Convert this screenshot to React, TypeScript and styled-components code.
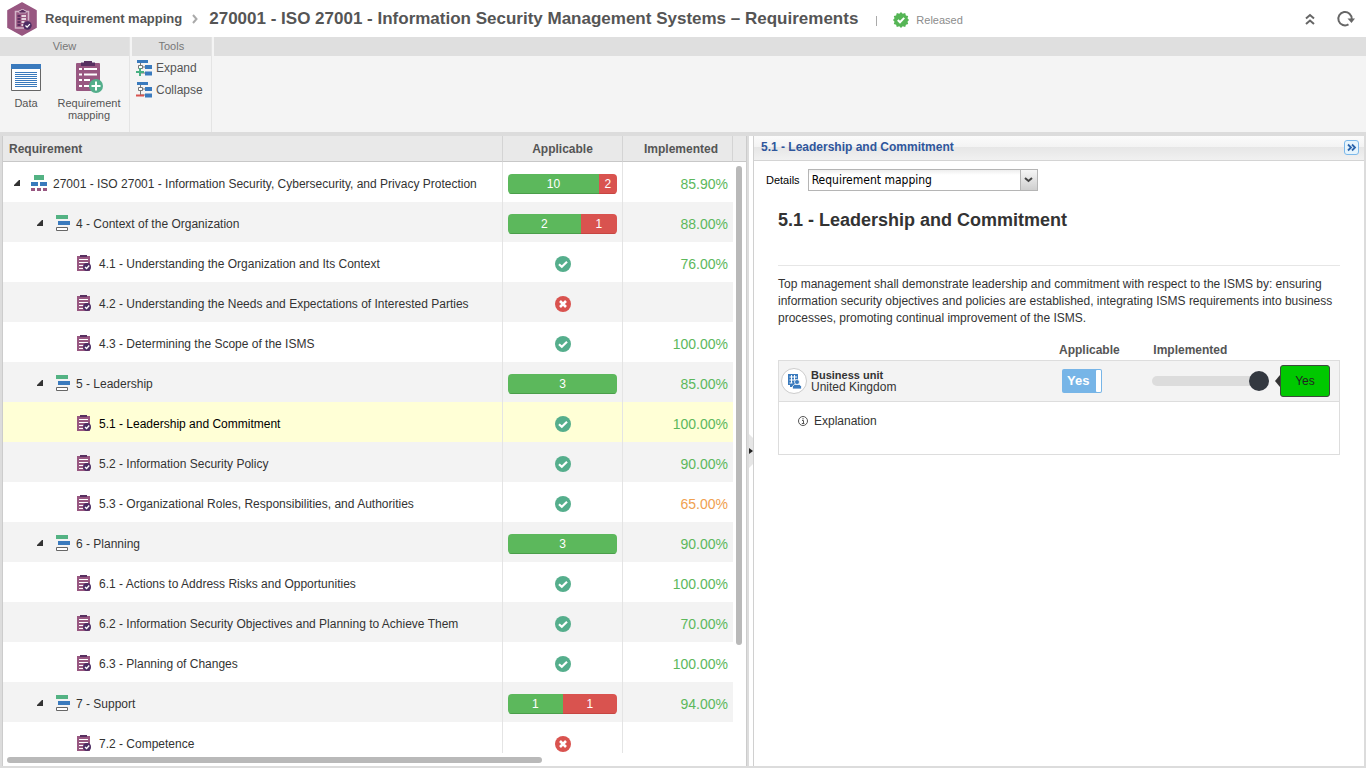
import React, { useState } from "react";
import styled, { createGlobalStyle, css } from "styled-components";

const sans = `"Liberation Sans", Arial, sans-serif`;
const humanist = `"DejaVu Sans Condensed", Tahoma, sans-serif`;

const GlobalStyle = createGlobalStyle`
  *, *::before, *::after { box-sizing: border-box; }
  body { margin: 0; background: #fff; color: #333; font: 12px/16px ${sans}; }
  button, input, select { font-family: inherit; }
  h1, h2, p { margin: 0; }
`;

const Page = styled.div`
  display: flex;
  flex-direction: column;
  height: 100vh;
  min-height: 320px;
  overflow: hidden;
`;

/* ---------- Title bar ---------- */

const TitleBar = styled.header`
  flex: none;
  display: flex;
  align-items: center;
  height: 37px;
  padding: 0 11px 0 7px;
  color: #555;
`;

const ModuleLink = styled.a`
  margin-left: 8px;
  color: #555;
  font-size: 13px;
  font-weight: bold;
  text-decoration: none;
`;

const Chevron = styled.svg`
  margin: 0 11px 0 10px;
`;

const Title = styled.h1`
  font-size: 17px;
  line-height: 20px;
  color: #555;
`;

const Divider = styled.span`
  width: 1px;
  height: 10px;
  margin: 4px 16px 0 18px;
  background: #aaa;
`;

const Status = styled.span`
  display: flex;
  align-items: center;
  gap: 7px;
  padding-top: 3px;
  font-size: 11px;
  color: #8c8c8c;
`;

const TitleActions = styled.div`
  display: flex;
  align-items: center;
  gap: 16px;
  margin-left: auto;
`;

const IconButton = styled.button`
  display: flex;
  padding: 0;
  border: 0;
  background: none;
  cursor: pointer;
`;

/* ---------- Ribbon ---------- */

const Ribbon = styled.nav`
  flex: none;
  display: flex;
  height: 95px;
  background: #f4f4f4;
`;

const RibbonGroup = styled.section`
  display: flex;
  flex-direction: column;
  border-right: 1px solid #e4e4e4;
  margin-right: 2px;
`;

const RibbonCaption = styled.h2`
  height: 19px;
  background: #dfdfdf;
  color: #777;
  font-size: 11px;
  font-weight: normal;
  line-height: 19px;
  text-align: center;
`;

const RibbonFiller = styled.div`
  flex: 1;
  height: 19px;
  background: #dfdfdf;
`;

const RibbonTools = styled.div<{ $stacked?: boolean }>`
  display: flex;
  ${(p) =>
    p.$stacked
      ? css`
          flex-direction: column;
          gap: 4px;
          padding: 3px 8px 0 4px;
        `
      : css`
          gap: 4px;
          padding: 4px 3px 0 4px;
        `}
`;

const LargeButton = styled.button<{ $wide?: boolean }>`
  display: flex;
  flex-direction: column;
  align-items: center;
  gap: 4px;
  width: ${(p) => (p.$wide ? 74 : 44)}px;
  padding: 0;
  border: 0;
  background: none;
  color: #555;
  font-size: 11px;
  line-height: 12px;
  cursor: pointer;
`;

const SmallButton = styled.button`
  display: flex;
  align-items: center;
  gap: 4px;
  height: 18px;
  padding: 0;
  border: 0;
  background: none;
  color: #555;
  font-size: 12px;
  cursor: pointer;
`;

/* ---------- Workspace ---------- */

const Workspace = styled.main`
  flex: 1;
  min-height: 0;
  display: grid;
  grid-template-columns: minmax(0, 745fr) 7px minmax(0, 610fr);
  padding: 0 2px;
  border-top: 4px solid #dcdcdc;
  border-bottom: 2px solid #dcdcdc;
  background: #dcdcdc;
`;

const ListPane = styled.section`
  position: relative;
  min-height: 0;
  overflow: hidden;
  border-left: 1px solid #ccc;
  border-right: 1px solid #ccc;
  background: #fff;
`;

const ListViewport = styled.div`
  height: calc(100% - 13px);
  overflow: hidden;
`;

const Grid = styled.table`
  width: 100%;
  border-collapse: separate;
  border-spacing: 0;
  table-layout: fixed;
`;

const HeadCell = styled.th<{ $width?: number; $align?: "center" | "right" }>`
  width: ${(p) => (p.$width ? `${p.$width}px` : "auto")};
  height: 26px;
  padding: 0 ${(p) => (p.$align === "right" ? 14 : 6)}px 0 6px;
  border-right: 1px solid #d4d4d4;
  border-bottom: 1px solid #c8c8c8;
  background: #e9e9e9;
  color: #555;
  font-size: 12px;
  text-align: ${(p) => p.$align ?? "left"};
  &:last-child {
    border-right: 0;
  }
`;

const Row = styled.tr<{ $tone: "plain" | "shade" | "selected" }>`
  --row: ${(p) =>
    p.$tone === "selected" ? "#ffffd6" : p.$tone === "shade" ? "#f3f3f3" : "#fff"};
  color: ${(p) => (p.$tone === "selected" ? "#000" : "#333")};
`;

const Cell = styled.td`
  height: 40px;
  padding: 3px 5px 0;
  border-right: 1px solid #e4e4e4;
  background: var(--row);
  vertical-align: middle;
  &:nth-child(3) {
    border-right: 0;
  }
`;

const GutterCell = styled.td`
  padding: 0;
`;

const NameCell = styled.div<{ $level: number }>`
  display: flex;
  align-items: center;
  height: 18px;
  padding-left: ${(p) => [6, 29, 69][p.$level]}px;
  white-space: nowrap;
`;

const ExpandButton = styled(IconButton)<{ $level: number }>`
  width: 8px;
  margin-right: ${(p) => (p.$level ? 11 : 9)}px;
`;

const NameText = styled.span<{ $gap: number }>`
  margin-left: ${(p) => p.$gap}px;
`;

const Centered = styled.div`
  display: flex;
  justify-content: center;
`;

const CountBar = styled.div`
  display: flex;
  height: 20px;
  overflow: hidden;
  border-radius: 4px;
  color: #fff;
  line-height: 20px;
  text-align: center;
`;

const CountPart = styled.span<{ $share: number; $kind: "yes" | "no" }>`
  flex: ${(p) => p.$share} 1 0;
  background: ${(p) => (p.$kind === "yes" ? "#5cb85c" : "#d9534f")};
  box-shadow: inset 0 -1px 0 ${(p) => (p.$kind === "yes" ? "#4a9e4a" : "#c64541")};
`;

const Percent = styled.div<{ $low?: boolean }>`
  color: ${(p) => (p.$low ? "#f0a150" : "#5cb85c")};
  font-size: 14px;
  text-align: right;
`;

const ScrollThumb = styled.div<{ $axis: "x" | "y" }>`
  position: absolute;
  border-radius: 3px;
  background: #b9b9b9;
  ${(p) =>
    p.$axis === "y"
      ? css`
          top: 30px;
          right: 4px;
          width: 6px;
          height: 76%;
        `
      : css`
          left: 4px;
          bottom: 3px;
          width: 72%;
          height: 6px;
        `}
`;

const Splitter = styled.div`
  display: flex;
  align-items: center;
  justify-content: flex-end;
  border-left: 2px solid #dcdcdc;
  border-right: 1px solid #d0d0d0;
  background: #fff;
`;

/* ---------- Details pane ---------- */

const DetailsPane = styled.section`
  min-width: 0;
  overflow: hidden;
  background: #fff;
`;

const PaneHeader = styled.div`
  display: flex;
  align-items: center;
  justify-content: space-between;
  height: 25px;
  padding: 0 5px 3px 7px;
  border-bottom: 1px solid #d4d4d4;
  background: linear-gradient(#fbfbfb 0, #f3f3f3 11px, #e6e6e6 11px, #f1f1f1 100%);
`;

const PaneTitle = styled.h2`
  color: #2f569c;
  font-size: 12px;
  line-height: 16px;
`;

const CollapsePane = styled(IconButton)`
  margin-top: 2px;
  padding: 1px;
  border: 1px solid #7cb8ea;
  border-radius: 3px;
  background: #e6f4fc;
`;

const FieldRow = styled.div`
  display: flex;
  align-items: center;
  gap: 8px;
  padding: 8px 12px;
  color: #000;
  font-size: 11px;
`;

const SelectBox = styled.div`
  position: relative;
  display: flex;
  width: 230px;
`;

const Select = styled.select`
  appearance: none;
  width: 100%;
  height: 22px;
  padding: 0 20px 0 3px;
  border: 1px solid #b5b5b5;
  border-radius: 0;
  background: linear-gradient(#eee, #fff 5px);
  color: #000;
  font: 12px/18px ${humanist};
`;

const SelectArrow = styled.span`
  position: absolute;
  top: 1px;
  right: 1px;
  display: flex;
  align-items: center;
  justify-content: center;
  width: 17px;
  height: 20px;
  border-left: 1px solid #b5b5b5;
  background: linear-gradient(#f6f6f6, #cfcfcf);
  pointer-events: none;
`;

const Content = styled.div`
  padding: 9px 24px 0;
`;

const ContentTitle = styled.h2`
  padding-bottom: 33px;
  border-bottom: 1px solid #e6e6e6;
  font-size: 18px;
  line-height: 24px;
`;

const Description = styled.p`
  padding: 10px 0 15px;
  line-height: 17px;
`;

const unitColumns = css`
  display: grid;
  grid-template-columns: minmax(0, 1fr) 91px 190px;
`;

const UnitHead = styled.div`
  ${unitColumns}
  padding-bottom: 2px;
  color: #555;
  font-weight: bold;
`;

const UnitCard = styled.div`
  border: 1px solid #ddd;
`;

const UnitRow = styled.div`
  ${unitColumns}
  align-items: center;
  height: 41px;
  padding-bottom: 1px;
  border-bottom: 1px solid #ddd;
  background: #f3f3f3;
`;

const Unit = styled.div`
  display: flex;
  align-items: center;
  gap: 4px;
  padding-left: 2px;
  line-height: 12px;
`;

const UnitIcon = styled.span`
  display: flex;
  align-items: center;
  justify-content: center;
  width: 26px;
  height: 26px;
  border: 1px solid #ccc;
  border-radius: 50%;
  background: #fff;
`;

const UnitKind = styled.strong`
  display: block;
  font-size: 11px;
`;

const Toggle = styled.label`
  display: flex;
  align-items: center;
  justify-content: space-between;
  width: 40px;
  height: 24px;
  margin-left: 4px;
  padding: 1px 1px 1px 5px;
  border-radius: 2px;
  background: #77b5e7;
  color: #fff;
  font-weight: bold;
  font-size: 13px;
  cursor: pointer;
`;

const ToggleInput = styled.input`
  position: absolute;
  opacity: 0;
  width: 1px;
  height: 1px;
  margin: 0;
`;

const ToggleKnob = styled.span`
  width: 5px;
  height: 22px;
  border-radius: 1px;
  background: #fff;
`;

const SliderCell = styled.div`
  display: flex;
  align-items: center;
`;

const Slider = styled.input`
  appearance: none;
  width: 117px;
  height: 10px;
  margin: 0 6px 0 3px;
  border-radius: 5px;
  background: #dcdcdc;
  &::-webkit-slider-thumb {
    appearance: none;
    width: 20px;
    height: 20px;
    border-radius: 50%;
    background: #333840;
  }
`;

const SliderValue = styled.output`
  display: flex;
  align-items: center;
  justify-content: center;
  width: 50px;
  height: 32px;
  border: 1px solid #3c4a3c;
  border-radius: 3px;
  background: #00c800;
  color: #222;
`;

const Explanation = styled.div`
  display: flex;
  align-items: flex-start;
  gap: 6px;
  height: 52px;
  padding: 11px 19px;
`;

/* ---------- Drawings ---------- */

const ModuleLogo = () => (
  <svg width="30" height="34" viewBox="0 0 30 34" aria-hidden="true">
    <path d="M15 1 29 8.6V25.4L15 33 1 25.4V8.6Z" fill="#985781" stroke="#985781" strokeWidth="1.6" strokeLinejoin="round" />
    <path d="M10 9.500h11.500v9M10 9.500h-1.500v16.500h8.500" fill="none" stroke="#d3b6ca" strokeWidth="1.500" />
    <path d="M12 10V8.500h2V7.500h3v1h2V11h-7Z" fill="#5c2f60" stroke="#d3b6ca" strokeWidth=".8" />
    <path d="M10.500 14h3M10.500 17h3M10.500 20h3M10.500 23h3" stroke="#5c2f60" strokeWidth="2" />
    <path d="M14.500 14h4.500M14.500 17h4.500M14.500 20h3M14.500 23h2" stroke="#fff" strokeWidth="1.300" />
    <circle cx="20.500" cy="23.500" r="4.200" fill="#4d2c63" />
    <path d="m18.500 23.500 1.600 1.600 2.800-3" fill="none" stroke="#fff" strokeWidth="1.300" />
  </svg>
);

const ReleasedSeal = () => (
  <svg width="16" height="16" viewBox="0 0 16 16" aria-hidden="true">
    <path
      d="M8 0l1.700 1.800L12.200 1l.7 2.400L15.200 4l-.7 2.300L16 8l-1.500 1.700.7 2.300-2.300.8-.7 2.300-2.500-.8L8 16l-1.700-1.700-2.500.8-.7-2.300L.8 12l.7-2.300L0 8l1.500-1.700L.8 4l2.300-.6L3.800 1l2.500.8Z"
      fill="#55b555"
    />
    <path d="m4.800 8 2.200 2.300 4.200-4.400" fill="none" stroke="#fff" strokeWidth="2" />
  </svg>
);

const DataIcon = () => (
  <svg width="30" height="33" viewBox="0 0 30 33" aria-hidden="true">
    <path d="M.5 5H29.500V30.500H.5Z" fill="#fff" stroke="#666" />
    <path d="M0 4H30V9H0Z" fill="#3a7abd" />
    <path d="M4 12.500H26M4 14.500H26M4 16.500H26M4 18.500H26M4 20.500H26M4 22.500H26M4 24.500H26M4 26.500H26" stroke="#3a7abd" />
  </svg>
);

const MappingIcon = () => (
  <svg width="28" height="33" viewBox="0 0 28 33" aria-hidden="true">
    <rect x="1" y="3" width="24" height="28" rx="1" fill="#985781" />
    <path d="M6 2.500h3V1h8v1.500h3V6H6Z" fill="#573060" />
    <path d="M4 9h3M4 14.500h3M4 20h3M4 26h3M9 9h13M9 14.500h13M9 20h6M9 26h5" stroke="#fff" strokeWidth="2" />
    <circle cx="21" cy="26" r="7" fill="#53ae8b" />
    <path d="M21 21.500v9M16.500 26h9" stroke="#fff" strokeWidth="2" />
  </svg>
);

const TreeToolIcon = ({ mode }: { mode: "expand" | "collapse" }) => (
  <svg width="16" height="16" viewBox="0 0 16 16" aria-hidden="true">
    <path d="M1 0h11v3H1ZM9 5h7v4H9ZM9 11.500h7v4H9Z" fill="#3a7abd" />
    <path d="M4.500 3v2M7 7h2M4.500 9v4H9" fill="none" stroke="#777" />
    <path d="M2.500 5.500h4v3h-4Z" fill="#fff" stroke="#777" />
    {mode === "expand" ? (
      <path d="M4 8v8M0 12h8" stroke="#48b083" strokeWidth="2" />
    ) : (
      <path d="M0 13.500h8" stroke="#d9534f" strokeWidth="2" />
    )}
  </svg>
);

const StandardIcon = () => (
  <svg width="16" height="18" viewBox="0 0 16 18" aria-hidden="true">
    <path d="M3 0h10v5H3Z" fill="#53b283" />
    <path d="M0 7h7v4H0ZM9 7h7v4H9Z" fill="#3a7abd" />
    <path d="M0 13h4v3H0ZM6 13h4v3H6ZM12 13h4v3h-4Z" fill="#985781" />
  </svg>
);

const ChapterIcon = () => (
  <svg width="14" height="18" viewBox="0 0 14 18" aria-hidden="true">
    <path d="M0 0h12v4H0Z" fill="#53b283" />
    <path d="M2 6h12v4H2Z" fill="#3a7abd" />
    <path d="M.5 12.500h11v3H.5Z" fill="#fff" stroke="#666" />
  </svg>
);

const ClauseIcon = () => (
  <svg width="15" height="18" viewBox="0 0 15 18" aria-hidden="true">
    <path d="M0 1h13v15H0Z" fill="#985781" />
    <path d="M3 0h7v2H3Z" fill="#573060" />
    <path d="M2 4.500h9M2 7.500h9M2 10.500h5M2 13.500h4" stroke="#fff" />
    <circle cx="10" cy="12" r="4" fill="#4d2c63" />
    <path d="m8 12 1.600 1.500 2.600-3" fill="none" stroke="#fff" strokeWidth="1.400" />
  </svg>
);

const ExpandedArrow = () => (
  <svg width="7" height="8" viewBox="0 0 7 8" aria-hidden="true">
    <path d="M5 0H6V6H0V5Z" fill="#333" />
  </svg>
);

const Mark = ({ ok }: { ok: boolean }) => (
  <svg width="16" height="16" viewBox="0 0 16 16" role="img" aria-label={ok ? "Yes" : "No"}>
    <circle cx="8" cy="8" r="8" fill={ok ? "#55ae8c" : "#d9534f"} />
    {ok ? (
      <path d="m4 8.200 2.800 2.600 5.200-5" fill="none" stroke="#fff" strokeWidth="2.200" />
    ) : (
      <path d="m5 5 6 6M11 5l-6 6" stroke="#fff" strokeWidth="2.600" />
    )}
  </svg>
);

/* ---------- Data ---------- */

type Item = {
  level: 0 | 1 | 2;
  name: string;
  counts?: [number, number];
  applicable?: boolean;
  done?: string;
  low?: boolean;
};

const items: Item[] = [
  { level: 0, name: "27001 - ISO 27001 - Information Security, Cybersecurity, and Privacy Protection", counts: [10, 2], done: "85.90%" },
  { level: 1, name: "4 - Context of the Organization", counts: [2, 1], done: "88.00%" },
  { level: 2, name: "4.1 - Understanding the Organization and Its Context", applicable: true, done: "76.00%" },
  { level: 2, name: "4.2 - Understanding the Needs and Expectations of Interested Parties", applicable: false },
  { level: 2, name: "4.3 - Determining the Scope of the ISMS", applicable: true, done: "100.00%" },
  { level: 1, name: "5 - Leadership", counts: [3, 0], done: "85.00%" },
  { level: 2, name: "5.1 - Leadership and Commitment", applicable: true, done: "100.00%" },
  { level: 2, name: "5.2 - Information Security Policy", applicable: true, done: "90.00%" },
  { level: 2, name: "5.3 - Organizational Roles, Responsibilities, and Authorities", applicable: true, done: "65.00%", low: true },
  { level: 1, name: "6 - Planning", counts: [3, 0], done: "90.00%" },
  { level: 2, name: "6.1 - Actions to Address Risks and Opportunities", applicable: true, done: "100.00%" },
  { level: 2, name: "6.2 - Information Security Objectives and Planning to Achieve Them", applicable: true, done: "70.00%" },
  { level: 2, name: "6.3 - Planning of Changes", applicable: true, done: "100.00%" },
  { level: 1, name: "7 - Support", counts: [1, 1], done: "94.00%" },
  { level: 2, name: "7.2 - Competence", applicable: false },
];

const levelIcons = [<StandardIcon />, <ChapterIcon />, <ClauseIcon />];
const levelGaps = [6, 6, 7];

const RequirementRow = ({ item, index, selected, onSelect }: { item: Item; index: number; selected: boolean; onSelect: () => void }) => (
  <Row $tone={selected ? "selected" : index % 2 ? "shade" : "plain"} onClick={onSelect}>
    <Cell>
      <NameCell $level={item.level}>
        {item.level < 2 && (
          <ExpandButton $level={item.level} aria-label={`Collapse ${item.name}`}>
            <ExpandedArrow />
          </ExpandButton>
        )}
        {levelIcons[item.level]}
        <NameText $gap={levelGaps[item.level]}>{item.name}</NameText>
      </NameCell>
    </Cell>
    <Cell>
      {item.counts ? (
        <CountBar>
          <CountPart $kind="yes" $share={item.counts[0]}>{item.counts[0]}</CountPart>
          {item.counts[1] > 0 && (
            <CountPart $kind="no" $share={item.counts[1]}>{item.counts[1]}</CountPart>
          )}
        </CountBar>
      ) : (
        <Centered>
          <Mark ok={!!item.applicable} />
        </Centered>
      )}
    </Cell>
    <Cell>{item.done && <Percent $low={item.low}>{item.done}</Percent>}</Cell>
    <GutterCell />
  </Row>
);

export default function App() {
  const [selected, setSelected] = useState(6);
  const [applies, setApplies] = useState(true);
  const [progress, setProgress] = useState(100);

  return (
    <Page>
      <GlobalStyle />
      <TitleBar>
        <ModuleLogo />
        <ModuleLink href="#mapping">Requirement mapping</ModuleLink>
        <Chevron width="6" height="10" viewBox="0 0 6 10" aria-hidden="true">
          <path d="m1 1 3.500 4L1 9" fill="none" stroke="#aaa" strokeWidth="2" />
        </Chevron>
        <Title>270001 - ISO 27001 - Information Security Management Systems – Requirements</Title>
        <Divider />
        <Status>
          <ReleasedSeal />
          Released
        </Status>
        <TitleActions>
          <IconButton aria-label="Collapse toolbar">
            <svg width="18" height="18" viewBox="0 0 18 18" aria-hidden="true">
              <path d="m5 8.500 4-3.500 4 3.500M5 14l4-3.500 4 3.500" fill="none" stroke="#666" strokeWidth="2" />
            </svg>
          </IconButton>
          <IconButton aria-label="Refresh">
            <svg width="20" height="18" viewBox="0 0 20 18" aria-hidden="true">
              <path d="M13.500 14.400A6.700 6.700 0 1 1 16.700 9" fill="none" stroke="#666" strokeWidth="2" />
              <path d="M12.500 8.500h7.500L16.500 13Z" fill="#666" />
            </svg>
          </IconButton>
        </TitleActions>
      </TitleBar>

      <Ribbon aria-label="Ribbon">
        <RibbonGroup>
          <RibbonCaption>View</RibbonCaption>
          <RibbonTools>
            <LargeButton>
              <DataIcon />
              <span>Data</span>
            </LargeButton>
            <LargeButton $wide>
              <MappingIcon />
              <span>Requirement mapping</span>
            </LargeButton>
          </RibbonTools>
        </RibbonGroup>
        <RibbonGroup>
          <RibbonCaption>Tools</RibbonCaption>
          <RibbonTools $stacked>
            <SmallButton>
              <TreeToolIcon mode="expand" />
              Expand
            </SmallButton>
            <SmallButton>
              <TreeToolIcon mode="collapse" />
              Collapse
            </SmallButton>
          </RibbonTools>
        </RibbonGroup>
        <RibbonFiller />
      </Ribbon>

      <Workspace>
        <ListPane>
          <ListViewport>
            <Grid>
              <thead>
                <tr>
                  <HeadCell scope="col">Requirement</HeadCell>
                  <HeadCell scope="col" $width={120} $align="center">Applicable</HeadCell>
                  <HeadCell scope="col" $width={110} $align="right">Implemented</HeadCell>
                  <HeadCell $width={13} aria-hidden="true" />
                </tr>
              </thead>
              <tbody>
                {items.map((item, i) => (
                  <RequirementRow key={item.name} item={item} index={i} selected={i === selected} onSelect={() => setSelected(i)} />
                ))}
              </tbody>
            </Grid>
          </ListViewport>
          <ScrollThumb $axis="y" />
          <ScrollThumb $axis="x" />
        </ListPane>

        <Splitter>
          <svg width="4" height="36" viewBox="0 0 4 36" aria-hidden="true">
            <path d="M0 1 4 5V31L0 35Z" fill="#e6e6e6" />
            <path d="M0 15v6l4-3Z" fill="#222" />
          </svg>
        </Splitter>

        <DetailsPane>
          <PaneHeader>
            <PaneTitle>5.1 - Leadership and Commitment</PaneTitle>
            <CollapsePane aria-label="Collapse details">
              <svg width="11" height="11" viewBox="0 0 11 11" aria-hidden="true">
                <path d="m2 2.500 3 3-3 3M6 2.500l3 3-3 3" fill="none" stroke="#2a64ac" strokeWidth="1.800" />
              </svg>
            </CollapsePane>
          </PaneHeader>
          <FieldRow>
            <label htmlFor="details">Details</label>
            <SelectBox>
              <Select id="details">
                <option>Requirement mapping</option>
              </Select>
              <SelectArrow>
                <svg width="9" height="6" viewBox="0 0 9 6" aria-hidden="true">
                  <path d="m1 1 3.500 3L8 1" fill="none" stroke="#444" strokeWidth="2" />
                </svg>
              </SelectArrow>
            </SelectBox>
          </FieldRow>
          <Content>
            <ContentTitle>5.1 - Leadership and Commitment</ContentTitle>
            <Description>
              Top management shall demonstrate leadership and commitment with respect to the ISMS by: ensuring
              information security objectives and policies are established, integrating ISMS requirements into business
              processes, promoting continual improvement of the ISMS.
            </Description>
            <UnitHead>
              <span />
              <label htmlFor="applicable">Applicable</label>
              <label htmlFor="implemented">&nbsp;Implemented</label>
            </UnitHead>
            <UnitCard>
              <UnitRow>
                <Unit>
                  <UnitIcon>
                    <svg width="16" height="16" viewBox="0 0 16 16" aria-hidden="true">
                      <path d="M2 1h10v13H4V12H2Z" fill="#3a7abd" />
                      <path d="M3.500 4h7.500M3.500 7h7.500M3.500 10h3M5.500 2v8M8.500 2v5" stroke="#fff" />
                      <path d="M6.500 16v-2.800l2-1.700h5l2 1.700V16Z" fill="#3a7abd" stroke="#fff" strokeWidth=".8" />
                      <circle cx="11" cy="9" r="2.500" fill="#3a7abd" stroke="#fff" strokeWidth=".8" />
                    </svg>
                  </UnitIcon>
                  <div>
                    <UnitKind>Business unit</UnitKind>
                    United Kingdom
                  </div>
                </Unit>
                <Toggle>
                  <ToggleInput id="applicable" type="checkbox" checked={applies} onChange={(e) => setApplies(e.target.checked)} />
                  {applies ? "Yes" : "No"}
                  <ToggleKnob />
                </Toggle>
                <SliderCell>
                  <Slider id="implemented" type="range" min="0" max="100" value={progress} onChange={(e) => setProgress(Number(e.target.value))} />
                  <svg width="5" height="12" viewBox="0 0 5 12" aria-hidden="true">
                    <path d="M5 0v12L0 6Z" fill="#333" />
                  </svg>
                  <SliderValue htmlFor="implemented">{progress === 100 ? "Yes" : `${progress}%`}</SliderValue>
                </SliderCell>
              </UnitRow>
              <Explanation>
                <svg width="10" height="16" viewBox="0 0 10 16" aria-hidden="true">
                  <circle cx="5" cy="8" r="4.500" fill="none" stroke="#555" />
                  <path d="M5 5v1.500M4 7.500h1.500v3M3.800 10.500h2.600" fill="none" stroke="#555" />
                </svg>
                Explanation
              </Explanation>
            </UnitCard>
          </Content>
        </DetailsPane>
      </Workspace>
    </Page>
  );
}
